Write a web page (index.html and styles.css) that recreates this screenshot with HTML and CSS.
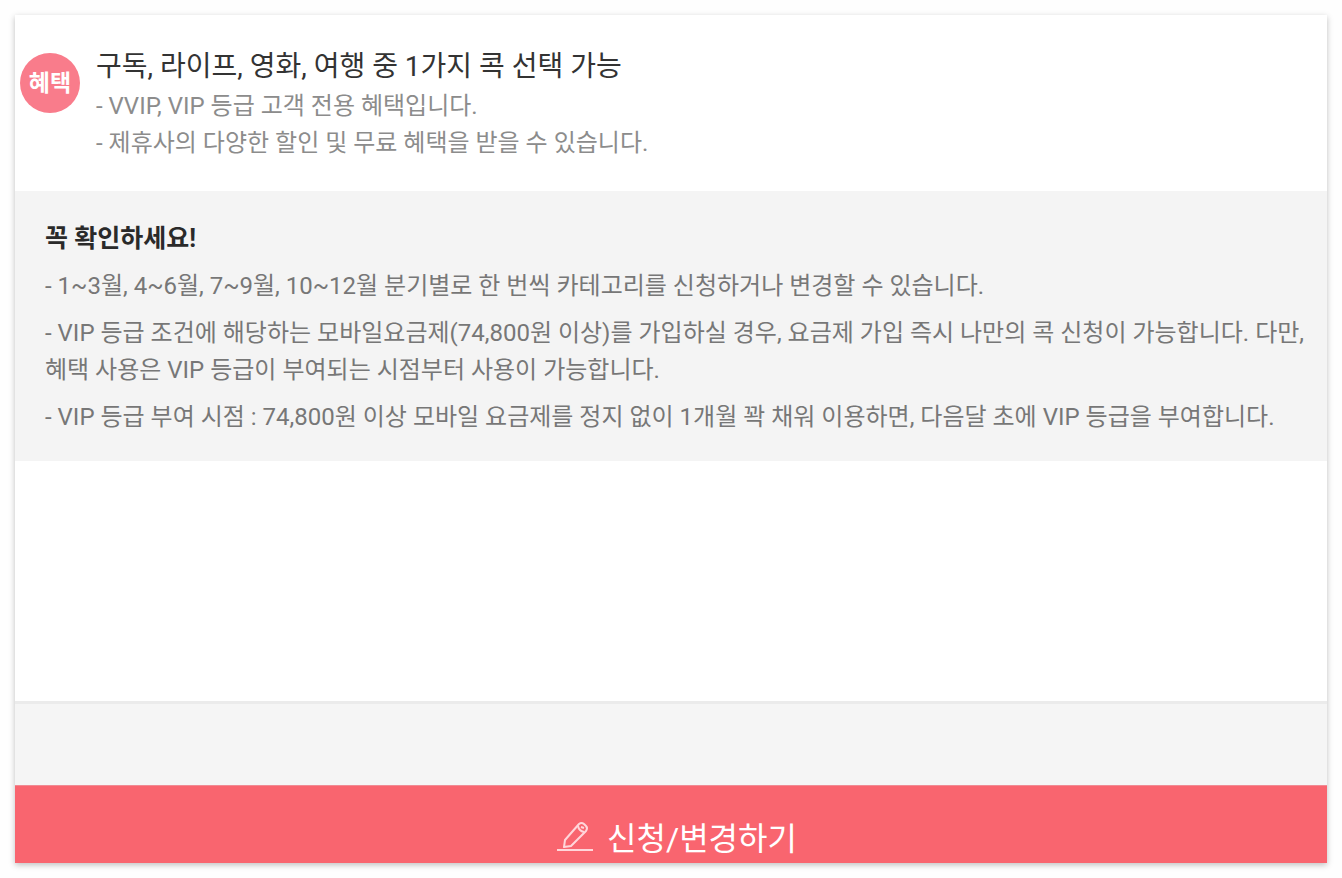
FILE: index.html
```
<!DOCTYPE html>
<html lang="ko">
<head>
  <meta charset="UTF-8">
  <meta name="viewport" content="width=device-width, initial-scale=1.0">
  <title>나만의 콕</title>
  <link rel="stylesheet" href="styles.css">
</head>
<body>
  <main class="card">
    <section class="benefit">
      <span class="badge">혜택</span>
      <div>
        <h2>구독, 라이프, 영화, 여행 중 1가지 콕 선택 가능</h2>
        <p>- VVIP, VIP 등급 고객 전용 혜택입니다.</p>
        <p>- 제휴사의 다양한 할인 및 무료 혜택을 받을 수 있습니다.</p>
      </div>
    </section>

    <section class="notice">
      <h3>꼭 확인하세요!</h3>
      <p>- 1~3월, 4~6월, 7~9월, 10~12월 분기별로 한 번씩 카테고리를 신청하거나 변경할 수 있습니다.</p>
      <p>- VIP 등급 조건에 해당하는 모바일요금제(74,800원 이상)를 가입하실 경우, 요금제 가입 즉시 나만의 콕 신청이 가능합니다. 다만, 혜택 사용은 VIP 등급이 부여되는 시점부터 사용이 가능합니다.</p>
      <p>- VIP 등급 부여 시점 : 74,800원 이상 모바일 요금제를 정지 없이 1개월 꽉 채워 이용하면, 다음달 초에 VIP 등급을 부여합니다.</p>
    </section>

    <div class="strip"></div>

    <button type="button" class="apply-btn">
      <svg class="pencil" viewBox="0 0 36 32" aria-hidden="true">
        <path d="M0 30H36"/>
        <path d="M7 27L8 20L22 4Q24.500 2 27 4L29 6Q31 8 29 11L14 26Z"/>
        <path d="M21 6Q22 11 27 12M24 7L27 8"/>
      </svg>
      <span>신청/변경하기</span>
    </button>
  </main>
</body>
</html>
```

FILE: styles.css
```
* { box-sizing: border-box; }
body {
  margin: 0;
  padding: 15px;
  min-height: 100vh;
  display: flex;
  background: #fefefe;
  font-family: Roboto, "Noto Sans CJK KR", sans-serif;
  word-break: keep-all;
}
h2, h3, p { margin: 0; }
.card {
  flex: 1;
  display: flex;
  flex-direction: column;
  background: #fff;
  box-shadow: 0 2px 6px rgba(0,0,0,0.25);
}
.benefit { display: flex; gap: 16px; padding: 33px 5px 29px; }
.badge {
  flex: none;
  width: 60px;
  height: 60px;
  margin-top: 5px;
  border-radius: 50%;
  background: #f97c8b;
  color: #fff;
  font-size: 23px;
  font-weight: bold;
  line-height: 62px;
  text-align: center;
}
h2 { margin-bottom: 2px; color: #333; font-size: 28px; font-weight: 400; line-height: 38px; }
p { color: #777; font-size: 24px; line-height: 37px; }
.benefit p { color: #8c8c8c; }
.notice { padding: 29px 20px 25px 30px; background: #f4f4f4; }
h3 { color: #2a2a2a; font-size: 25px; font-weight: bold; line-height: 38px; }
.notice p { margin-top: 10px; }
.strip { height: 84px; margin-top: auto; background: #f5f5f5; border-top: 3px solid #ebebeb; }
.apply-btn {
  display: flex;
  align-items: center;
  justify-content: center;
  gap: 14px;
  height: 78px;
  padding: 22px 0 0 12px;
  border: none;
  border-top: 1px solid #f08a93;
  background: #f9656f;
  color: #fff;
  font: inherit;
  font-size: 32px;
  cursor: pointer;
}
.pencil { width: 36px; height: 32px; fill: none; stroke: #ffd6da; stroke-width: 2; stroke-linejoin: round; }
```
